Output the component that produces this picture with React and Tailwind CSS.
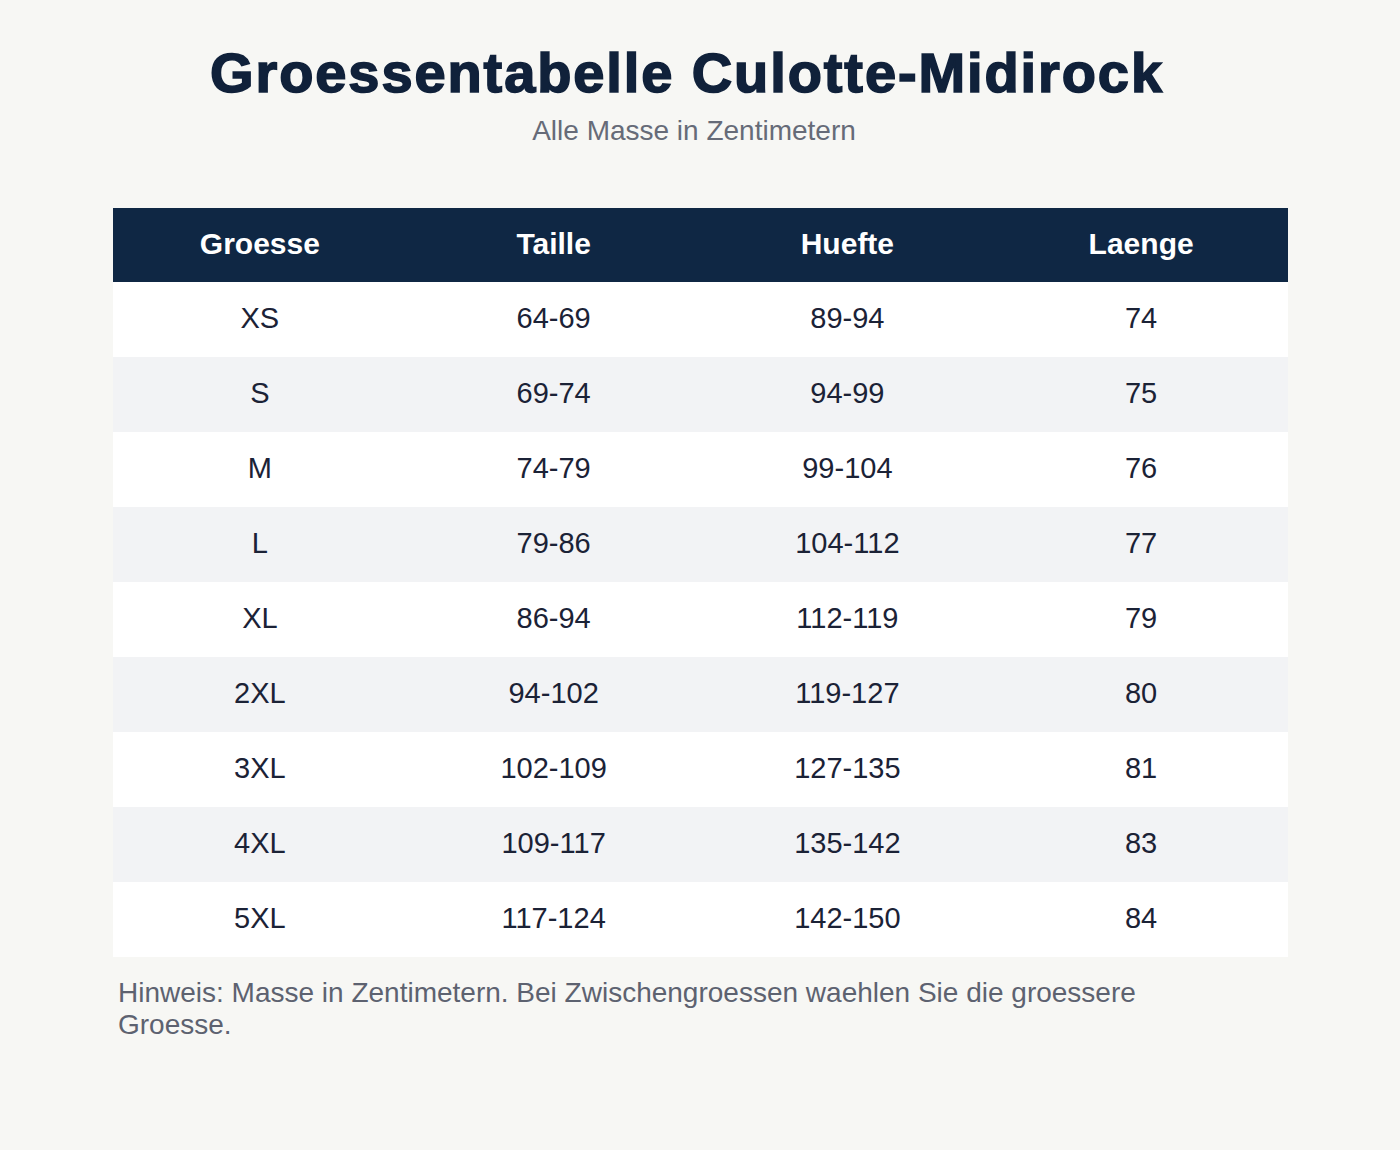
const rows = [
  ["XS", "64-69", "89-94", "74"],
  ["S", "69-74", "94-99", "75"],
  ["M", "74-79", "99-104", "76"],
  ["L", "79-86", "104-112", "77"],
  ["XL", "86-94", "112-119", "79"],
  ["2XL", "94-102", "119-127", "80"],
  ["3XL", "102-109", "127-135", "81"],
  ["4XL", "109-117", "135-142", "83"],
  ["5XL", "117-124", "142-150", "84"],
];

const headers = ["Groesse", "Taille", "Huefte", "Laenge"];

export default function App() {
  return (
    <div className="min-h-[1150px] w-[1400px] bg-[#f7f7f4] font-['Liberation_Sans',Arial,sans-serif]">
      <div className="flex flex-col items-center pt-[40px]">
        <h1 className="pr-[26px] text-[56px] font-black leading-[66px] text-[#10213a] tracking-[1.9px] [-webkit-text-stroke:1.6px_#10213a]">
          Groessentabelle Culotte-Midirock
        </h1>
        <p className="mt-[9px] pr-[12px] text-[28px] leading-[32px] text-[#666b78]">Alle Masse in Zentimetern</p>
      </div>

      <div className="mx-[113px] mt-[61px] w-[1175px]">
        {/* header */}
        <div className="grid grid-cols-4 bg-[#0f2744] h-[74px] items-center pb-[4px]">
          {headers.map((h) => (
            <div key={h} className="text-center text-[30px] font-bold text-white">
              {h}
            </div>
          ))}
        </div>
        {rows.map((r, i) => (
          <div
            key={r[0]}
            className={`grid grid-cols-4 h-[75px] items-center pb-[2px] ${i % 2 === 1 ? "bg-[#f2f3f5]" : "bg-white"}`}
          >
            {r.map((c, j) => (
              <div key={j} className="text-center text-[29px] text-[#1b2236]">
                {c}
              </div>
            ))}
          </div>
        ))}
        <p className="mt-[20px] pl-[5px] pr-[100px] text-[28px] leading-[32px] text-[#5d6270]">
          Hinweis: Masse in Zentimetern. Bei Zwischengroessen waehlen Sie die groessere Groesse.
        </p>
      </div>
    </div>
  );
}
